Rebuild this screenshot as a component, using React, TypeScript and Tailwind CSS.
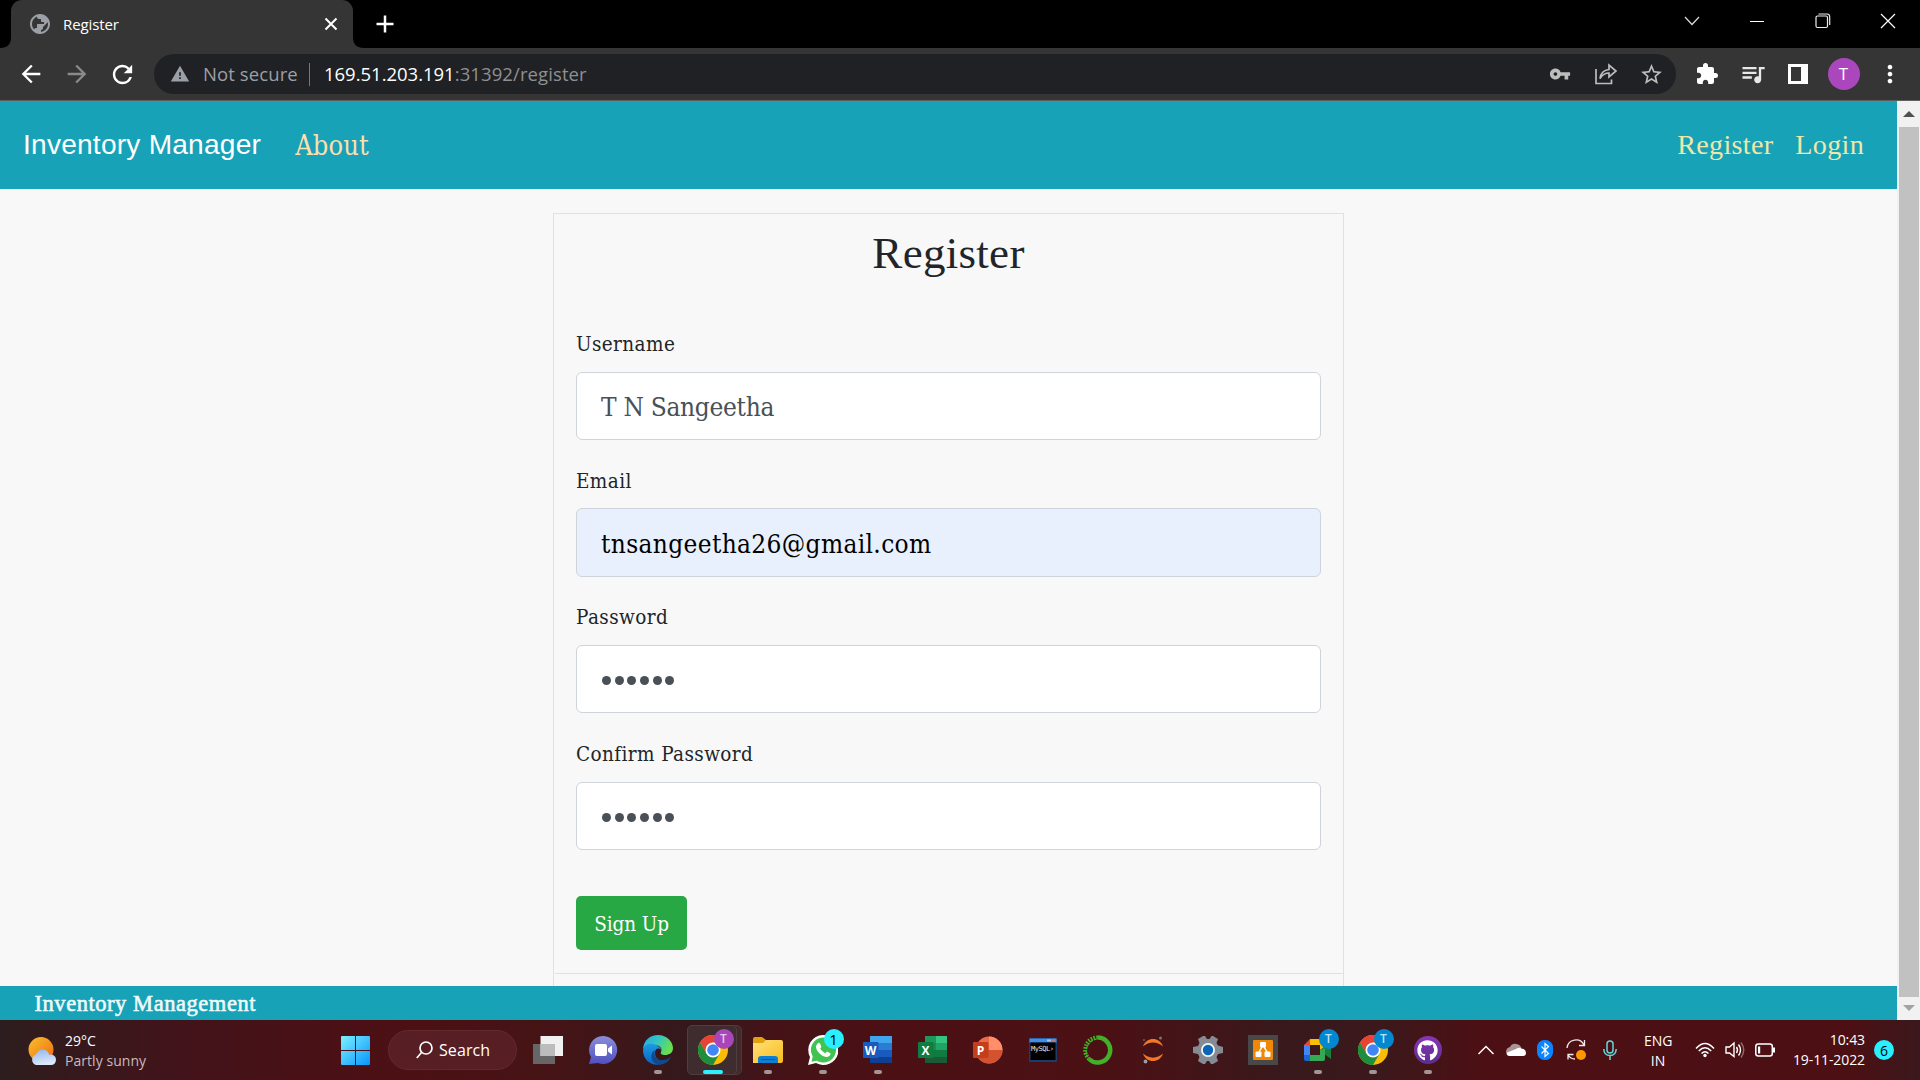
import type { ReactNode } from "react";
import {
  MdArrowBack,
  MdArrowForward,
  MdExtension,
  MdMoreVert,
  MdPublic,
  MdQueueMusic,
  MdRefresh,
  MdStarBorder,
  MdVpnKey,
  MdWarning,
} from "react-icons/md";
import { FaGithub } from "react-icons/fa";

const segoe = "font-['Open_Sans','Noto_Sans',sans-serif]";
const cambria = "font-['DejaVu_Serif_Condensed','DejaVu_Serif',serif] [font-stretch:condensed]";
const times = "font-['Liberation_Serif',serif]";

function TabStrip() {
  return (
    <div className="flex h-12 items-end bg-black">
      <svg width="11" height="11" className="shrink-0">
        <path d="M0 11 Q11 11 11 0 V11Z" fill="#353535" />
      </svg>
      <div className="flex h-12 w-[342px] items-center rounded-t-[11px] bg-[#353535] pl-[17px]">
        <MdPublic size={24} color="#9aa0a6" className="-scale-x-100" />
        <span className={`${segoe} ml-[11px] text-[15px] tracking-[-0.1px] text-white`}>Register</span>
        <svg width="14" height="14" className="mr-[15px] ml-auto">
          <path d="M1.500 1.500 L12.500 12.500 M12.500 1.500 L1.500 12.500" stroke="#fff" strokeWidth="2" />
        </svg>
      </div>
      <svg width="11" height="11" className="shrink-0">
        <path d="M11 11 Q0 11 0 0 V11Z" fill="#353535" />
      </svg>
      <div className="ml-[12px] flex h-12 items-center">
        <svg width="18" height="18">
          <path d="M9 0.500V17.500M0.500 9H17.500" stroke="#fff" strokeWidth="2.500" />
        </svg>
      </div>
      <div className="ml-auto flex h-[42px] items-center self-start">
        <div className="flex w-[65px] justify-center">
          <svg width="16" height="10">
            <path d="M1 1 L8 8.500 L15 1" stroke="#ddd" strokeWidth="1.200" fill="none" />
          </svg>
        </div>
        <div className="flex w-[66px] justify-center">
          <span className="h-px w-[14px] bg-white" />
        </div>
        <div className="flex w-[65px] justify-center">
          <svg width="16" height="16" fill="none" stroke="#eee" strokeWidth="1.200">
            <rect x="1" y="3" width="11.500" height="11.500" rx="1.500" />
            <path d="M3.500 1H12Q14.700 1 14.700 3.800V12" />
          </svg>
        </div>
        <div className="flex w-[65px] justify-center">
          <svg width="16" height="16">
            <path d="M1 1L15 15M15 1L1 15" stroke="#fff" strokeWidth="1.200" />
          </svg>
        </div>
      </div>
    </div>
  );
}

function Slot({ w, children }: { w: string; children: ReactNode }) {
  return <div className={`flex shrink-0 items-center justify-center ${w}`}>{children}</div>;
}

function Toolbar() {
  return (
    <div className="flex h-[53px] items-center border-b border-[#5f5f5f] bg-[#353535]">
      <div className="ml-[8px] flex">
        <Slot w="w-[46px]"><MdArrowBack size={28} color="#fff" /></Slot>
        <Slot w="w-[46px]"><MdArrowForward size={28} color="#8a8a8a" /></Slot>
        <Slot w="w-[45px]"><MdRefresh size={29} color="#fff" /></Slot>
      </div>
      <div className={`${segoe} ml-[9px] flex h-10 w-[1522px] items-center rounded-full bg-[#202124] text-[18.5px] leading-none`}>
        <MdWarning size={20} color="#9aa0a6" className="ml-[16px]" />
        <span className="ml-[13px] w-[96px] whitespace-nowrap tracking-[0.1px] text-[#9aa0a6]">Not secure</span>
        <span className="ml-[10px] h-[23px] w-px bg-[#75787c]" />
        <span className="ml-[14px] whitespace-nowrap tracking-[0.1px] text-[#8f9092]">
          <span className="tracking-[-0.02px] text-white">169.51.203.191</span>:31392/register
        </span>
        <div className="mr-[2px] ml-auto flex">
          <Slot w="w-[46px]"><MdVpnKey size={22} color="#bdbdbd" /></Slot>
          <Slot w="w-[46px]">
            <svg width="22" height="22" viewBox="0 0 22 22" fill="none" stroke="#bdbdbd" strokeWidth="1.700">
              <path d="M1 6V20.500H16.500V16.500" />
              <path d="M5 15.500Q6 7.500 14 6.500V2L21 8L14 14V10Q8.500 10 5 15.500Z" />
            </svg>
          </Slot>
          <Slot w="w-[45px]"><MdStarBorder size={25} color="#bdbdbd" /></Slot>
        </div>
      </div>
      <div className="ml-[8px] flex">
        <Slot w="w-[46px]"><MdExtension size={24} color="#fff" /></Slot>
        <Slot w="w-[45px]"><MdQueueMusic size={28} color="#e8e8e8" /></Slot>
        <Slot w="w-[45px]">
          <svg width="20" height="20">
            <rect width="20" height="20" fill="#fff" />
            <rect x="3" y="3" width="10" height="14" fill="#353535" />
          </svg>
        </Slot>
        <Slot w="w-[47px]">
          <span className={`${segoe} flex size-8 items-center justify-center rounded-full bg-[#ab47bc] text-[17px] text-white`}>T</span>
        </Slot>
        <Slot w="w-[45px]"><MdMoreVert size={28} color="#fff" /></Slot>
      </div>
    </div>
  );
}

type FieldProps = { label: string; value?: string; filled?: boolean; secret?: boolean };

function Field({ label, value, filled, secret }: FieldProps) {
  return (
    <div className="flex h-[136.600px] flex-col">
      <div className={`${cambria} h-[45.800px] text-[20.5px] leading-[36px] tracking-[0.4px] text-[#212529]`}>{label}</div>
      <div
        className={`flex h-[68.400px] items-center rounded-[6px] border border-[#ced4da] px-[24px] ${filled ? "bg-[#e8f0fe]" : "bg-white"}`}
      >
        {secret ? (
          <div className="mt-[3px] ml-[1px] flex gap-[3.67px]">
            {[0, 1, 2, 3, 4, 5].map((n) => (
              <span key={n} className="size-[9px] rounded-full bg-[#495057]" />
            ))}
          </div>
        ) : (
          <span
            className={`${cambria} mt-[2px] text-[26px] leading-none ${filled ? "tracking-[0.35px] text-black" : "tracking-[-0.3px] text-[#495057]"}`}
          >
            {value}
          </span>
        )}
      </div>
    </div>
  );
}

function Page() {
  return (
    <div className="flex h-[919px] w-[1897px] flex-col bg-[#f8f8f8]">
      <nav className="flex h-[88px] shrink-0 items-center bg-[#17a2b8] pr-[33px] pl-[23px] text-[28.125px] leading-none">
        <span className="font-['Liberation_Sans',sans-serif] tracking-[0.22px] text-white">Inventory Manager</span>
        <span className={`${cambria} ml-[34px] text-[27px] tracking-[0.1px] text-[#ffdead]`}>About</span>
        <span className={`${times} ml-auto tracking-[0.3px] text-[#eee8aa]`}>Register</span>
        <span className={`${times} ml-[22px] tracking-[0.3px] text-[#eee8aa]`}>Login</span>
      </nav>
      <main className="flex min-h-0 flex-1 justify-center overflow-hidden pt-[24px]">
        <div className="h-[900px] w-[791px] border border-[#dee2e6]">
          <h1 className={`${times} pt-[12px] text-center text-[45px] leading-[54px] tracking-[0.3px] text-[#212529]`}>Register</h1>
          <form className="px-[22px] pt-[46px]">
            <Field label="Username" value="T N Sangeetha" />
            <Field label="Email" value="tnsangeetha26@gmail.com" filled />
            <Field label="Password" secret />
            <Field label="Confirm Password" secret />
            <button
              type="button"
              className={`${cambria} mt-[23.600px] flex h-[54px] w-[111px] items-center justify-center rounded-[5px] bg-[#28a745] pt-[2px] text-[20.5px] tracking-[-0.1px] text-white`}
            >
              Sign Up
            </button>
          </form>
          <div className="mt-[23px] ml-px h-px bg-[#dee2e6]" />
        </div>
      </main>
      <footer
        className={`${times} flex h-[34px] shrink-0 items-center bg-[#17a2b8] pt-[3px] pl-[34.500px] text-[22.5px] leading-none tracking-[0.55px] text-[#eefafb] [-webkit-text-stroke:0.6px_#eefafb]`}
      >
        Inventory Management
      </footer>
    </div>
  );
}

function Scrollbar() {
  return (
    <div className="flex h-[919px] w-[23px] flex-col items-center bg-[#f1f1f1]">
      <svg width="12" height="26" className="shrink-0">
        <path d="M0 16L6 10L12 16Z" fill="#505050" />
      </svg>
      <div className="ml-px w-5 flex-1 bg-[#c1c1c1]" />
      <svg width="12" height="23" className="shrink-0">
        <path d="M0 8L6 14L12 8Z" fill="#a3a3a3" />
      </svg>
    </div>
  );
}

function ChromeIcon() {
  return (
    <svg width="30" height="30" viewBox="0 0 30 30">
      <circle cx="15" cy="15" r="15" fill="#fbbc04" />
      <path d="M2 7.500A15 15 0 0 0 15 30L21.500 18.750L15 15L8.500 18.750Z" fill="#1e8e3e" />
      <path d="M2 7.500L8.500 18.750L15 15V7.500Z" fill="#1e8e3e" />
      <path d="M2 7.500A15 15 0 0 1 28 7.500H15L8.500 11.500L7.600 17Z" fill="#ea4335" />
      <circle cx="15" cy="15" r="7.500" fill="#fff" />
      <circle cx="15" cy="15" r="5.800" fill="#4285f4" />
    </svg>
  );
}

function OfficeIcon({ letter, kind }: { letter: string; kind: "word" | "excel" | "ppt" }) {
  const c = {
    word: ["#41a5ee", "#2b7cd3", "#185abd", "#103f91", "#185abd"],
    excel: ["#33c481", "#21a366", "#107c41", "#185c37", "#107c41"],
    ppt: ["#ff8f6b", "#ed6c47", "#d35230", "#c43e1c", "#c43e1c"],
  }[kind];
  return (
    <svg width="30" height="30" viewBox="0 0 30 30">
      {kind === "ppt" ? (
        <>
          <circle cx="16" cy="15" r="13.500" fill={c[1]} />
          <path d="M16 1.500A13.500 13.500 0 0 1 29.500 15H16Z" fill={c[0]} />
          <path d="M2.500 15H29.500A13.500 13.500 0 0 1 2.500 15Z" fill={c[2]} />
        </>
      ) : (
        <>
          <rect x="7" y="1" width="22" height="7" fill={c[0]} />
          <rect x="7" y="8" width="22" height="7" fill={c[1]} />
          <rect x="7" y="15" width="22" height="7" fill={c[2]} />
          <rect x="7" y="22" width="22" height="6" fill={c[3]} />
          {kind === "excel" && <path d="M7 1H18V22H7Z" fill="#107c41" opacity="0.600" />}
        </>
      )}
      <rect x="0" y="7" width="15.500" height="16" rx="1" fill={c[4]} />
      <text x="7.600" y="19.500" textAnchor="middle" fontFamily="Open Sans" fontWeight="700" fontSize="12" fill="#fff">
        {letter}
      </text>
    </svg>
  );
}

function Task({ children, running, badge }: { children: ReactNode; running?: boolean; badge?: ReactNode }) {
  return (
    <div className="relative flex h-[60px] w-[55px] shrink-0 items-center justify-center">
      {children}
      {badge}
      {running && <span className="absolute bottom-[6px] left-[23.500px] h-1 w-2 rounded-full bg-[#a39495]" />}
    </div>
  );
}

function Badge({ tone, children }: { tone: string; children: ReactNode }) {
  return (
    <span className={`${segoe} absolute top-[9px] left-[28.500px] flex size-5 items-center justify-center rounded-full leading-none ${tone}`}>
      {children}
    </span>
  );
}

function TaskIcons() {
  return (
    <div className="flex">
      <Task>
        <svg width="30" height="30">
          <rect y="9" width="22" height="20" fill="#666" />
          <rect x="7.500" y="1" width="22.500" height="20" fill="#f0f0f0" />
          <rect x="7.500" y="9" width="14.500" height="12" fill="#bcbcbc" />
        </svg>
      </Task>
      <Task>
        <svg width="30" height="30">
          <defs>
            <linearGradient id="chat" x2="0" y2="1">
              <stop stopColor="#8a8fd8" />
              <stop offset="1" stopColor="#4f50c0" />
            </linearGradient>
          </defs>
          <path d="M15.500 1A14 14 0 1 1 10 28L1 29L3 22A14 14 0 0 1 15.500 1Z" fill="url(#chat)" />
          <rect x="7" y="9" width="12" height="12" rx="2" fill="#fff" />
          <path d="M20 13.500L24 10.500V19.500L20 16.500Z" fill="#fff" />
        </svg>
      </Task>
      <Task running>
        <svg width="30" height="30" viewBox="0 0 30 30">
          <defs>
            <linearGradient id="edgeTop" x2="1" y2="0.400">
              <stop stopColor="#2aa9de" />
              <stop offset="0.500" stopColor="#33c3c4" />
              <stop offset="1" stopColor="#66e04f" />
            </linearGradient>
            <linearGradient id="edgeLeft" x2="0" y2="1">
              <stop stopColor="#1b9de2" />
              <stop offset="1" stopColor="#0c5fc4" />
            </linearGradient>
          </defs>
          <path d="M0 14C1 5 7 0 15 0C24 0 30 7 30 13C30 18 26 20 22 20C19 20 17 19 18 17C20 13 16 10 12 10C7 9 2 11 0 14Z" fill="url(#edgeTop)" />
          <path d="M0 15C1 9 6 8 10 9C15 10 18 13 18 15C15 12 12 14 12 18C12 24 18 28 23 26C15 34 0 29 0 15Z" fill="url(#edgeLeft)" />
          <path d="M12 15C10 21 14 26 20 25C24 25 27 23 28 21C26 28 19 31 13 29C7 26 7 18 12 15Z" fill="#114a8b" />
        </svg>
      </Task>
      <div className="relative flex h-[60px] w-[55px] items-center justify-center">
        <span className="absolute top-[5px] left-[8px] h-[50px] w-[49px] rounded-[5px] border border-[#4d393b] bg-[#402a2c]" />
        <span className="absolute top-[5px] left-[2px] h-[50px] w-[50px] rounded-[5px] border border-[#503d3f] bg-[#3e2c2e]" />
        <span className="relative">
          <ChromeIcon />
        </span>
        <Badge tone="bg-[#a845b8] text-[#e6c6ec] text-[12px] font-semibold">T</Badge>
        <span className="absolute bottom-[6px] left-[17.500px] h-1 w-5 rounded-full bg-[#2cf0ff]" />
      </div>
      <Task running>
        <svg width="30" height="30">
          <defs>
            <linearGradient id="folder" x2="1" y2="1">
              <stop stopColor="#ffe07a" />
              <stop offset="1" stopColor="#fbbc1c" />
            </linearGradient>
          </defs>
          <path d="M0 4Q0 2 2 2H9L13 5H21V12H0Z" fill="#e0a010" />
          <path d="M0 8H10L13 5H28Q30 5 30 7V26Q30 28 28 28H0Z" fill="url(#folder)" />
          <path d="M5 28V24Q5 21 8 21H22Q25 21 25 24V28Z" fill="#0f7fd4" />
          <path d="M8 24.500H22" stroke="#0a56a0" strokeWidth="1" />
        </svg>
      </Task>
      <Task running badge={<Badge tone="bg-[#28f0ff] text-black text-[15px]">1</Badge>}>
        <svg width="30" height="30">
          <path d="M15 0A15 15 0 1 1 8 28L0 30L2 22A15 15 0 0 1 15 0Z" fill="#fff" />
          <path d="M15 2.500A12.500 12.500 0 1 1 9 25.700L3.500 26.700L4.700 21.500A12.500 12.500 0 0 1 15 2.500Z" fill="#40c351" />
          <path d="M9.500 8.500Q11 7 12 8.500L13.300 11.500Q13.300 12.500 12.200 13.500Q14 17 17.300 18.200L19 16.500L22.500 18.300Q22.500 21.500 19 22Q15 22 11 18Q7.500 14 8 11Z" fill="#fff" />
        </svg>
      </Task>
      <Task running><OfficeIcon letter="W" kind="word" /></Task>
      <Task><OfficeIcon letter="X" kind="excel" /></Task>
      <Task><OfficeIcon letter="P" kind="ppt" /></Task>
      <Task>
        <svg width="30" height="30">
          <rect x="1" y="3" width="28" height="24" rx="1" fill="#1d3c6e" />
          <rect x="1.500" y="3.500" width="27" height="4" fill="#3f8fe6" />
          <rect x="24" y="4.500" width="2.500" height="2" fill="#e8734a" />
          <rect x="19" y="4.500" width="4" height="2" fill="#9cc6f5" />
          <rect x="2.500" y="7.500" width="25" height="17.500" fill="#000" />
          <text x="3" y="15.500" fontFamily="DejaVu Sans Mono" fontSize="7" textLength="23" fill="#e8e8e8">MySQL›</text>
        </svg>
      </Task>
      <Task>
        <svg width="30" height="30" fill="none" stroke="#43b02a">
          <path d="M15 2.500A12.500 12.500 0 1 1 6 24" strokeWidth="4.500" />
          <path d="M6 24A12.500 12.500 0 0 1 15 2.500" strokeWidth="4" strokeDasharray="1.600 1.200" />
          <path d="M4.500 22A12.500 12.500 0 0 1 14 4" strokeWidth="1.200" strokeDasharray="3 1" />
        </svg>
      </Task>
      <Task>
        <svg width="30" height="30">
          <path d="M5 11.500C8 1.500 22 1.500 25 11.500C19 6 11 6 5 11.500Z" fill="#f37726" />
          <path d="M5 18.500C8 28.500 22 28.500 25 18.500C19 24 11 24 5 18.500Z" fill="#f37726" />
          <circle cx="22.500" cy="3" r="1.500" fill="#767677" />
          <circle cx="6" cy="5" r="1.100" fill="#616161" />
          <circle cx="7.500" cy="26.500" r="1.900" fill="#9e9e9e" />
        </svg>
      </Task>
      <Task>
        <svg width="30" height="30" viewBox="0 0 30 30">
          <path
            d="M11 1H12L14 4H16.500L18.500 1H20L25 4L23.500 8L25 10.500L30 12V18L25 19L23.500 22L25 26L20 29H18L16 26H14L12 29H10L5 26L6.500 22L5 19L0 18V12L5 11L6.500 8L5 4L10 1Z"
            fill="#858b92"
          />
          <circle cx="15" cy="15" r="7" fill="#f4f4f4" />
          <circle cx="15" cy="15" r="5.200" fill="#0b66b8" />
        </svg>
      </Task>
      <Task>
        <svg width="30" height="30">
          <rect width="30" height="30" fill="#484848" />
          <rect x="5" y="5" width="20" height="20" rx="1" fill="#f08705" />
          <path d="M15 10L10.500 18M15 10L19.500 18" stroke="#fff" strokeWidth="1.500" />
          <rect x="12" y="7" width="6" height="5.500" rx="1" fill="#fff" />
          <rect x="7.500" y="16.500" width="6" height="5.500" rx="1" fill="#fff" />
          <rect x="16.500" y="16.500" width="6" height="5.500" rx="1" fill="#fff" />
        </svg>
      </Task>
      <Task running badge={<Badge tone="bg-[#0288d1] text-[#b8e2f8] text-[12px] font-semibold">T</Badge>}>
        <svg width="30" height="30">
          <path d="M1 10L7 4V10Z" fill="#ea4335" />
          <path d="M7 4H20Q22 4 22 6V13L17 15V10H7Z" fill="#fbbc04" />
          <path d="M1 10H7V20H1Z" fill="#4285f4" />
          <path d="M1 20H7V26H3Q1 26 1 24Z" fill="#1967d2" />
          <path d="M7 20H17V15L22 13V24Q22 26 20 26H7Z" fill="#34a853" />
          <path d="M17 15L28 6V24L22 19.500V13Z" fill="#188038" />
        </svg>
      </Task>
      <Task running badge={<Badge tone="bg-[#0288d1] text-[#b8e2f8] text-[12px] font-semibold">T</Badge>}>
        <ChromeIcon />
      </Task>
      <Task running>
        <span className="flex size-7 items-center justify-center rounded-full bg-gradient-to-b from-[#8a35b4] to-[#5c2d8f]">
          <FaGithub size={21} color="#fff" />
        </span>
      </Task>
    </div>
  );
}

function Tray() {
  return (
    <div className={`${segoe} ml-[15px] flex items-center text-[14px] text-white`}>
      <Slot w="w-[31px]">
        <svg width="16" height="10" fill="none" stroke="#fff" strokeWidth="1.500">
          <path d="M0.500 9L8 1.500L15.500 9" />
        </svg>
      </Slot>
      <Slot w="w-[29px]">
        <svg width="20" height="14">
          <path d="M0 9Q0 5 4 4Q6 0 10.500 1Q14 1.500 15.500 5L8 11L1 12Z" fill="#a99496" />
          <path d="M3 13Q0 12 1 9.500L10 6Q13 4 15.500 5.500Q20 6 20 10Q20 13 17 13Z" fill="#fff" />
        </svg>
      </Slot>
      <Slot w="w-[30px]">
        <svg width="16" height="20">
          <rect width="16" height="20" rx="7.500" fill="#0a84ff" />
          <path d="M4.500 6.500L11.500 13.500L8 16.500V3.500L11.500 6.500L4.500 13.500" fill="none" stroke="#fff" strokeWidth="1.200" />
        </svg>
      </Slot>
      <Slot w="w-[31px]">
        <svg width="20" height="22" fill="none" stroke="#f3e8e8" strokeWidth="1.300">
          <path d="M1 9A9 9 0 0 1 18 6M18.500 1V6.500H13" />
          <path d="M2 20.500V15.500H7.500M2 16Q4.500 20 9 20" />
          <circle cx="15" cy="16" r="5" fill="#ff9800" stroke="none" />
        </svg>
      </Slot>
      <Slot w="w-[38px]">
        <svg width="14" height="20" fill="none" stroke="#5fd8dc" strokeWidth="1.500">
          <rect x="4" y="1" width="6" height="12" rx="3" />
          <path d="M0.800 9Q1 15.500 7 15.500Q13 15.500 13.200 9M7 15.500V20" />
        </svg>
      </Slot>
      <div className="ml-[15px] w-[28px] pt-px text-center leading-[20px]">
        <div>ENG</div>
        <div>IN</div>
      </div>
      <div className="ml-[23px] flex items-center gap-[10px]">
        <svg width="20" height="16" fill="none" stroke="#fff" strokeWidth="1.500">
          <path d="M1 6.500Q10 -3.500 19 6.500M3.800 9Q10 2.500 16.200 9M6.500 11.500Q10 8 13.500 11.500" />
          <circle cx="10" cy="13.500" r="1.700" fill="#fff" stroke="none" />
        </svg>
        <svg width="20" height="18" fill="none" stroke="#fff" strokeWidth="1.400">
          <path d="M1 6H4.500L9 2V15.500L4.500 12H1Z" />
          <path d="M11.500 6Q13.500 9 11.500 12M13.500 3.500Q17.500 9 13.500 14.500" />
          <path d="M16 1.500Q21.500 9 16 16.500" stroke="#8d6c6e" />
        </svg>
        <svg width="20" height="14">
          <rect x="0.800" y="1" width="16.500" height="12" rx="2.500" fill="none" stroke="#fff" strokeWidth="1.500" />
          <rect x="3" y="3.500" width="2.200" height="7" fill="#fff" />
          <rect x="18" y="4.500" width="2" height="5" fill="#fff" />
        </svg>
      </div>
      <div className="ml-[17px] w-[73px] text-right leading-[20px] tracking-[-0.1px] whitespace-nowrap">
        <div>10:43</div>
        <div>19-11-2022</div>
      </div>
      <span className="ml-[9px] flex size-5 items-center justify-center rounded-full bg-[#28f0ff] pt-px text-[14px] text-black">6</span>
    </div>
  );
}

function Taskbar() {
  return (
    <div
      className="flex h-[60px] items-center bg-[linear-gradient(90deg,#2d1d1e_0px,#43131a_190px,#4c1014_400px,#451416_560px,#33191c_690px,#441317_770px,#4c1014_900px,#4a1115_1120px,#38191c_1290px,#3b181b_1380px,#4c1014_1480px,#4c1014_1850px,#3a181c_1920px)]"
    >
      <div className={`${segoe} flex w-[341px] items-center pl-[28px] text-[14px] leading-[20px]`}>
        <svg width="28" height="28" className="mt-px">
          <defs>
            <linearGradient id="sun" x2="1" y2="1">
              <stop stopColor="#f9c02d" />
              <stop offset="1" stopColor="#ee6a10" />
            </linearGradient>
            <linearGradient id="cloud" x2="0.300" y2="1">
              <stop stopColor="#8fb4ee" />
              <stop offset="1" stopColor="#dce8fb" />
            </linearGradient>
          </defs>
          <circle cx="13" cy="12.500" r="12.500" fill="url(#sun)" />
          <path d="M8 28A5.500 5.500 0 0 1 8 17.500Q10 12.500 15 12.500Q20 13 21 17.500Q28 17 28 23Q27.500 28 23 28Z" fill="url(#cloud)" />
        </svg>
        <div className="ml-[9px] pt-[2px]">
          <div className="text-white">29°C</div>
          <div className="tracking-[0.05px] text-[#c9bbbc]">Partly sunny</div>
        </div>
      </div>
      <svg width="29" height="29">
        <defs>
          <linearGradient id="win" x2="1" y2="1">
            <stop stopColor="#7af3ff" />
            <stop offset="1" stopColor="#0a94fb" />
          </linearGradient>
        </defs>
        <path d="M0 1Q0 0 1 0H14V14H0ZM15 0H28Q29 0 29 1V14H15ZM0 15H14V29H1Q0 29 0 28ZM15 15H29V28Q29 29 28 29H15Z" fill="url(#win)" />
      </svg>
      <div className={`${segoe} ml-[18px] flex h-10 w-[129px] items-center rounded-full border border-[#5f2a2e] bg-[#571f23] pl-[27px] text-[16px] text-white`}>
        <svg width="17" height="18" fill="none" stroke="#fff" strokeWidth="1.700">
          <circle cx="10" cy="7" r="6" />
          <path d="M5.500 11.500L0.800 17" />
        </svg>
        <span className="ml-[6px] tracking-[0.1px]">Search</span>
      </div>
      <div className="ml-[3px]">
        <TaskIcons />
      </div>
      <Tray />
    </div>
  );
}

export default function App() {
  return (
    <div className="flex h-[1080px] w-[1920px] flex-col overflow-hidden">
      <TabStrip />
      <Toolbar />
      <div className="flex">
        <Page />
        <Scrollbar />
      </div>
      <Taskbar />
    </div>
  );
}
